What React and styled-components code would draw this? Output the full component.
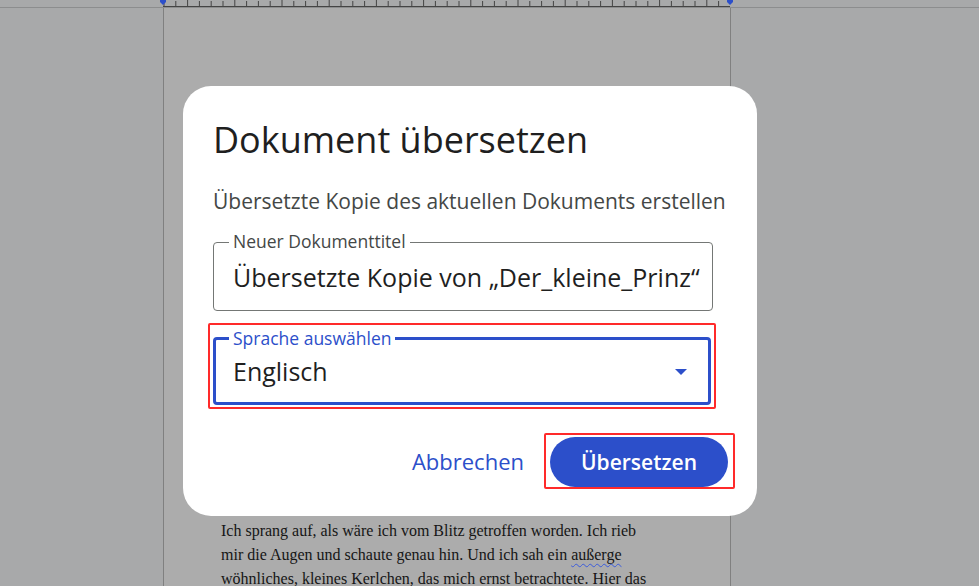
import React from 'react';
import styled, { createGlobalStyle } from 'styled-components';

const GlobalStyle = createGlobalStyle`
  html, body {
    margin: 0;
    padding: 0;
    width: 979px;
    height: 586px;
    overflow: hidden;
    background: #a8a9aa;
  }
`;

const blue = '#2c4fca';

export default function App() {
  const ticks = [];
  for (let i = 0; i < 48; i++) {
    const x = 1 + i * 11.8;
    const long = i % 4 === 2;
    ticks.push(<line key={i} x1={x} x2={x} y1={long ? 0 : 1} y2={6} stroke="#444" strokeWidth="1" />);
  }

  return (
    <Screen>
      <GlobalStyle />
      <Ruler>
        <LeftGutter />
        <RulerTrack>
          <svg width="567" height="7" viewBox="0 0 567 7">
            {ticks}
            <line x1="0" x2="567" y1="6.5" y2="6.5" stroke="#444" />
            <path d="M-3 0 L3 0 L3 2 L0 5 L-3 2 Z" fill="#2c4fca" />
            <path d="M564 0 L570 0 L570 2 L567 5 L564 2 Z" fill="#2c4fca" />
          </svg>
        </RulerTrack>
        <RightGutter />
      </Ruler>

      <Workspace>
        <LeftGutter />
        <Page>
          <PageText>
            Ich sprang auf, als wäre ich vom Blitz getroffen worden. Ich rieb
            <br />
            mir die Augen und schaute genau hin. Und ich sah ein <Misspelled>außerge</Misspelled>
            <br />
            <Misspelled>wöhnliches</Misspelled>, kleines Kerlchen, das mich ernst betrachtete. Hier das
          </PageText>
        </Page>
        <RightGutter />
      </Workspace>

      <Dialog>
        <Title>Dokument übersetzen</Title>
        <Subtitle>Übersetzte Kopie des aktuellen Dokuments erstellen</Subtitle>

        <Field>
          <FieldLabel>Neuer Dokumenttitel</FieldLabel>
          <FieldValue>Übersetzte Kopie von „Der_kleine_Prinz“</FieldValue>
        </Field>

        <Highlight>
          <Field $focused>
            <FieldLabel $focused>Sprache auswählen</FieldLabel>
            <FieldValue>Englisch</FieldValue>
            <Caret viewBox="0 0 12 6" width="12" height="6">
              <path d="M0 0 L12 0 L6 6 Z" fill={blue} />
            </Caret>
          </Field>
        </Highlight>

        <Actions>
          <TextButton>Abbrechen</TextButton>
          <ButtonMark>
            <FilledButton>Übersetzen</FilledButton>
          </ButtonMark>
        </Actions>
      </Dialog>
    </Screen>
  );
}

const Screen = styled.div`
  position: relative;
  width: 979px;
  height: 586px;
  display: flex;
  flex-direction: column;
  font-family: 'Open Sans', 'Noto Sans', sans-serif;
`;

const Ruler = styled.div`
  height: 7px;
  display: flex;
  border-bottom: 1px solid #8c8d8e;
`;

const LeftGutter = styled.div`
  width: 163px;
  flex-shrink: 0;
`;

const RightGutter = styled.div`
  flex: 1;
`;

const RulerTrack = styled.div`
  width: 567px;
  height: 7px;
  svg { display: block; overflow: visible; }
`;

const Workspace = styled.div`
  flex: 1;
  display: flex;
`;

const Page = styled.div`
  width: 568px;
  background: #acacac;
  border-left: 1px solid #808080;
  border-right: 1px solid #808080;
  padding: 511px 0 0 57px;
  box-sizing: border-box;
`;

const PageText = styled.p`
  margin: 0;
  font-family: 'Liberation Serif', 'Times New Roman', serif;
  font-size: 16px;
  line-height: 24px;
  color: #151515;
  white-space: nowrap;
`;

const Misspelled = styled.span`
  text-decoration: underline wavy #3b5bdb;
  text-decoration-thickness: 1px;
  text-underline-offset: 3px;
`;

const Dialog = styled.div`
  position: absolute;
  left: 183px;
  top: 86px;
  width: 574px;
  height: 430px;
  box-sizing: border-box;
  background: #ffffff;
  border-radius: 28px;
  padding: 30px 30px 0 30px;
  display: flex;
  flex-direction: column;
`;

const Title = styled.h2`
  margin: 0;
  font-size: 36px;
  line-height: 48px;
  font-weight: 400;
  color: #1f1f1f;
`;

const Subtitle = styled.p`
  margin: 23px 0 0;
  font-size: 21px;
  line-height: 28px;
  color: #444746;
  white-space: nowrap;
`;

const Field = styled.div`
  position: relative;
  height: ${p => (p.$focused ? '68px' : '69px')};
  width: ${p => (p.$focused ? '498px' : '500px')};
  box-sizing: border-box;
  border: ${p => (p.$focused ? `3px solid ${blue}` : '1px solid #747775')};
  border-radius: 4px;
  margin-top: ${p => (p.$focused ? '0' : '27px')};
  padding: 0 0 0 ${p => (p.$focused ? '17px' : '19px')};
  display: flex;
  align-items: center;
`;

const FieldLabel = styled.span`
  position: absolute;
  left: ${p => (p.$focused ? '13px' : '15px')};
  top: -13px;
  padding: 0 4px;
  background: #fff;
  font-size: 17.5px;
  line-height: 22px;
  color: ${p => (p.$focused ? blue : '#444746')};
`;

const FieldValue = styled.span`
  font-size: 25px;
  line-height: 32px;
  color: #1f1f1f;
  white-space: nowrap;
`;

const Caret = styled.svg`
  position: absolute;
  right: 21px;
  top: 29px;
`;

const Highlight = styled.div`
  margin: 12px 0 0 -5px;
  width: 508px;
  box-sizing: border-box;
  border: 2px solid #ff2a2a;
  border-radius: 2px;
  padding: 12px 3px 2px 3px;
`;

const Actions = styled.div`
  margin: 24px -8px 0 0;
  display: flex;
  justify-content: flex-end;
  align-items: center;
  gap: 20px;
`;

const TextButton = styled.button`
  border: none;
  background: none;
  padding: 0;
  font-family: inherit;
  font-size: 22px;
  font-weight: 500;
  color: ${blue};
`;

const ButtonMark = styled.div`
  border: 2px solid #ff2a2a;
  border-radius: 2px;
  padding: 2px 5px 0 4px;
`;

const FilledButton = styled.button`
  width: 178px;
  height: 50px;
  border: none;
  border-radius: 25px;
  background: ${blue};
  color: #fff;
  font-family: inherit;
  font-size: 21px;
  font-weight: 600;
`;
